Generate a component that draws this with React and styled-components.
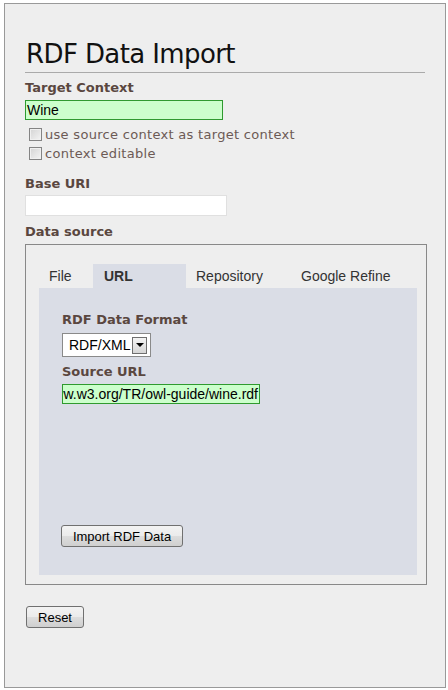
import styled, { createGlobalStyle } from 'styled-components'

const Global = createGlobalStyle`
  body {
    margin: 0;
    background: #ffffff;
    font-family: "DejaVu Sans", Verdana, sans-serif;
  }
`

const colors = {
  frame: '#eeeeee',
  label: '#5a4740',
  soft: '#6c5a55',
  green: '#ccffcc',
  greenBorder: '#2f9a2f',
  panel: '#dadde6',
}

const Frame = styled.div`
  box-sizing: border-box;
  margin: 3px 0 0 4px;
  width: 442px;
  height: 685px;
  border: 1px solid #999999;
  background: ${colors.frame};
  padding: 35px 0 0 20px;
`
const Title = styled.h1`
  margin: 0;
  font-family: "DejaVu Sans", Verdana, sans-serif;
  font-weight: normal;
  font-size: 26px;
  letter-spacing: -0.6px;
  line-height: 30px;
  color: #111111;
  padding-left: 1px;
`
const Rule = styled.div`
  width: 400px;
  height: 1px;
  margin-top: 3px;
  background: #aaaaaa;
`
const FieldLabel = styled.div`
  font-family: "DejaVu Sans", Verdana, sans-serif;
  font-weight: bold;
  font-size: 13px;
  line-height: 16px;
  color: ${colors.label};
  margin-top: ${p => p.$top || 0}px;
`
const TextInput = styled.div`
  box-sizing: border-box;
  width: ${p => p.$w}px;
  height: ${p => p.$h || 20}px;
  margin-top: ${p => p.$top || 0}px;
  background: ${p => (p.$ok ? colors.green : '#ffffff')};
  border: 1px solid ${p => (p.$ok ? colors.greenBorder : '#e0e0e0')};
  font-family: "Liberation Sans", Arial, sans-serif;
  font-size: 14px;
  line-height: 18px;
  color: #000000;
  padding: 0 1px;
  display: flex;
  align-items: center;
  justify-content: ${p => (p.$end ? 'flex-end' : 'flex-start')};
  overflow: hidden;
  white-space: nowrap;
`
const Checks = styled.div`
  margin-top: 5px;
  padding-left: 4px;
`
const CheckRow = styled.label`
  display: flex;
  align-items: center;
  height: 19px;
  gap: 3px;
  font-family: "DejaVu Sans", Verdana, sans-serif;
  font-size: 13px;
  letter-spacing: 0.3px;
  color: ${colors.soft};
`
const Box = styled.span`
  box-sizing: border-box;
  width: 13px;
  height: 13px;
  border: 1px solid #848484;
  background: linear-gradient(135deg, #d4d4d4, #f4f4f4);
  box-shadow: inset 0 0 0 1px #f0f0f0;
`
const Fieldset = styled.div`
  box-sizing: border-box;
  margin-top: 4px;
  width: 402px;
  height: 341px;
  border: 1px solid #888888;
  padding: 19px 9px 9px 13px;
  display: flex;
  flex-direction: column;
`
const TabBar = styled.div`
  display: flex;
  height: 24px;
`
const Tab = styled.div`
  box-sizing: border-box;
  width: ${p => (p.$w ? `${p.$w}px` : 'auto')};
  padding-left: ${p => (p.$active ? 11 : 10)}px;
  background: ${p => (p.$active ? colors.panel : 'transparent')};
  font-family: "Liberation Sans", Arial, sans-serif;
  font-size: 14px;
  font-weight: ${p => (p.$active ? 'bold' : 'normal')};
  line-height: 24px;
  color: #333333;
`
const Panel = styled.div`
  flex: 1;
  background: ${colors.panel};
  padding: 24px 0 0 23px;
`
const Select = styled.div`
  box-sizing: border-box;
  margin-top: 5px;
  width: 89px;
  height: 24px;
  background: #ffffff;
  border: 1px solid #8a8a8a;
  display: flex;
  align-items: center;
  justify-content: space-between;
  padding: 0 3px 0 6px;
  font-family: "Liberation Sans", Arial, sans-serif;
  font-size: 14px;
  color: #000000;
`
const Arrow = styled.span`
  box-sizing: border-box;
  width: 15px;
  height: 17px;
  border: 1px solid #6f6f6f;
  background: linear-gradient(#f4f4f4, #d6d6d6);
  display: flex;
  align-items: center;
  justify-content: center;

  &::after {
    content: '';
    border-left: 4px solid transparent;
    border-right: 4px solid transparent;
    border-top: 4px solid #000000;
  }
`
const Button = styled.button`
  box-sizing: border-box;
  display: block;
  margin-top: ${p => p.$top || 0}px;
  margin-left: ${p => p.$left || 0}px;
  height: 22px;
  width: ${p => p.$w}px;
  padding: 0;
  border: 1px solid #707070;
  border-radius: 3px;
  background: linear-gradient(#f3f3f3 0%, #ebebeb 50%, #dddddd 51%, #cfcfcf 100%);
  font-family: "Liberation Sans", Arial, sans-serif;
  font-size: 13px;
  color: #000000;
`

const App = () => {
  return (
    <>
      <Global />
      <Frame>
        <Title>RDF Data Import</Title>
        <Rule />
        <FieldLabel $top={7}>Target Context</FieldLabel>
        <TextInput $ok $w={198} $top={4}>Wine</TextInput>
        <Checks>
          <CheckRow><Box />use source context as target context</CheckRow>
          <CheckRow><Box />context editable</CheckRow>
        </Checks>
        <FieldLabel $top={13}>Base URI</FieldLabel>
        <TextInput $w={202} $h={21} $top={3} />
        <FieldLabel $top={8}>Data source</FieldLabel>
        <Fieldset>
          <TabBar>
            <Tab $w={54}>File</Tab>
            <Tab $w={93} $active>URL</Tab>
            <Tab $w={105}>Repository</Tab>
            <Tab>Google Refine</Tab>
          </TabBar>
          <Panel>
            <FieldLabel>RDF Data Format</FieldLabel>
            <Select>RDF/XML<Arrow /></Select>
            <FieldLabel $top={7}>Source URL</FieldLabel>
            <TextInput $ok $end $w={198} $top={4}>www.w3.org/TR/owl-guide/wine.rdf</TextInput>
            <Button $w={122} $top={121} $left={-1}>Import RDF Data</Button>
          </Panel>
        </Fieldset>
        <Button $w={58} $top={21} $left={1}>Reset</Button>
      </Frame>
    </>
  )
}

export default App
